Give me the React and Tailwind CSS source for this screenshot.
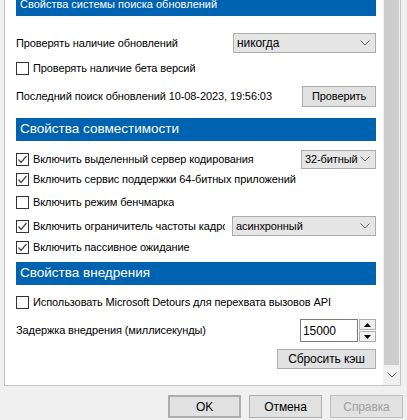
import React from "react";

const font = { fontFamily: '"Liberation Sans", Arial, sans-serif' };

function Check({ checked }) {
  return (
    <div className="w-[13px] h-[13px] border border-[#333333] bg-white flex items-center justify-center shrink-0">
      {checked && (
        <svg width="11" height="11" viewBox="0 0 11 11">
          <polyline points="1.5,5.5 4,8.5 9.5,2" fill="none" stroke="#444444" strokeWidth="1.2" />
        </svg>
      )}
    </div>
  );
}

function Chevron() {
  return (
    <svg width="10" height="6" viewBox="0 0 10 6" className="shrink-0">
      <polyline points="0.5,0.5 5,5 9.5,0.5" fill="none" stroke="#606060" strokeWidth="1" />
    </svg>
  );
}

function Select({ text, className }) {
  return (
    <div className={"bg-[#e5e5e5] border border-[#adadad] flex items-center pl-[3px] pr-[5px] shrink-0 " + className}>
      <span className="flex-1 overflow-hidden whitespace-nowrap">{text}</span>
      <Chevron />
    </div>
  );
}

function Header({ children, className = "text-[13.5px]" }) {
  return (
    <div className={"h-[23px] bg-[#0063b1] text-white flex items-center px-[4px] shrink-0 tracking-normal " + className}>
      {children}
    </div>
  );
}

function CheckRow({ checked, label, className = "", children }) {
  return (
    <div className={"h-[20px] flex items-center " + className}>
      <Check checked={checked} />
      <span className="ml-[4px] whitespace-nowrap overflow-hidden">{label}</span>
      {children}
    </div>
  );
}

function Btn({ children, className = "" }) {
  return (
    <div className={"bg-[#e1e1e1] border border-[#adadad] flex items-center justify-center shrink-0 " + className}>
      {children}
    </div>
  );
}

export default function App() {
  return (
    <div className="w-[407px] h-[420px] bg-[#f0f0f0] overflow-hidden text-[11px] tracking-[-0.1px] text-black" style={font}>
      <div className="ml-[4px] w-[397px] h-[386px] bg-white border-l border-r border-b border-[#c4c4c4] flex overflow-hidden">
        <div className="flex-1 pl-[11px] pr-[7px] overflow-hidden">
          <div className="flex flex-col -mt-[7px]">
            <Header className="text-[11px]">Свойства системы поиска обновлений</Header>
            <div className="mt-[17px] h-[20px] flex items-center">
              <span className="flex-1">Проверять наличие обновлений</span>
              <Select text="никогда" className="w-[143px] h-[20px] text-[12px]" />
            </div>
            <CheckRow className="mt-[5px]" checked={false} label="Проверять наличие бета версий" />
            <div className="mt-[8px] h-[21px] flex items-center">
              <span className="flex-1 whitespace-nowrap">Последний поиск обновлений 10-08-2023, 19:56:03</span>
              <Btn className="w-[74px] h-[21px]">Проверить</Btn>
            </div>
            <div className="mt-[11px]">
              <Header>Свойства совместимости</Header>
            </div>
            <div className="mt-[8px] h-[20px] flex items-center">
              <Check checked />
              <span className="ml-[4px] flex-1 whitespace-nowrap">Включить выделенный сервер кодирования</span>
              <Select text="32-битный" className="w-[75px] h-[19px]" />
            </div>
            <CheckRow checked label="Включить сервис поддержки 64-битных приложений" />
            <CheckRow className="mt-[3px]" checked={false} label="Включить режим бенчмарка" />
            <div className="mt-[4px] h-[20px] flex items-center">
              <Check checked />
              <span className="ml-[4px] mr-[7px] w-[192px] whitespace-nowrap overflow-hidden">Включить ограничитель частоты кадров</span>
              <Select text="асинхронный" className="flex-1 h-[20px]" />
            </div>
            <CheckRow className="mt-[1px]" checked label="Включить пассивное ожидание" />
            <div className="mt-[5px]">
              <Header>Свойства внедрения</Header>
            </div>
            <CheckRow className="mt-[7px]" checked={false} label="Использовать Microsoft Detours для перехвата вызовов API" />
            <div className="mt-[7px] h-[23px] flex items-center">
              <span className="flex-1">Задержка внедрения (миллисекунды)</span>
              <div className="w-[58px] h-[23px] border border-[#7a7a7a] bg-white flex items-center pl-[2px] text-[12px]">15000</div>
              <div className="ml-[1px] w-[17px] h-[23px] flex flex-col gap-[1px]">
                <div className="flex-1 border border-[#adadad] bg-[#f0f0f0] flex items-center justify-center">
                  <svg width="7" height="4" viewBox="0 0 7 4"><polygon points="3.5,0 7,4 0,4" fill="#000" /></svg>
                </div>
                <div className="flex-1 border border-[#adadad] bg-[#f0f0f0] flex items-center justify-center">
                  <svg width="7" height="4" viewBox="0 0 7 4"><polygon points="0,0 7,0 3.5,4" fill="#000" /></svg>
                </div>
              </div>
            </div>
            <div className="mt-[7px] flex justify-end">
              <Btn className="w-[99px] h-[20px] text-[12px]">Сбросить кэш</Btn>
            </div>
          </div>
        </div>
        <div className="w-[17px] bg-[#f0f0f0] flex flex-col">
          <div className="mx-[1px] h-[365px] bg-[#cdcdcd]" />
          <div className="flex-1 flex items-center justify-center">
            <Chevron />
          </div>
        </div>
      </div>
      <div className="mt-[9px] flex justify-end pr-[4px] gap-[8px] text-[12px]">
        <Btn className="w-[73px] h-[23px] border-[#0078d7] border-2">OK</Btn>
        <Btn className="w-[73px] h-[23px]">Отмена</Btn>
        <Btn className="w-[73px] h-[23px] bg-[#cccccc] border-[#bfbfbf] text-[#a0a0a0]">Справка</Btn>
      </div>
    </div>
  );
}
